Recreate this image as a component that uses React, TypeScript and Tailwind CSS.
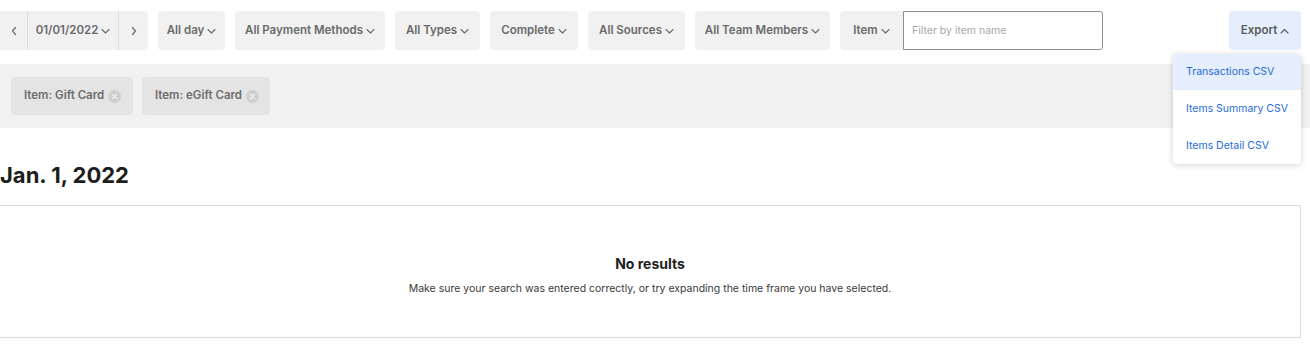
import React from "react";

const Chevron = ({ up = false }: { up?: boolean }) => (
  <svg width="9" height="6" viewBox="0 0 9 6" className="ml-[3px] shrink-0" fill="none">
    <path
      d={up ? "M1 5 L4.5 1.5 L8 5" : "M1 1.5 L4.5 5 L8 1.5"}
      stroke="currentColor"
      strokeWidth="1.1"
      strokeLinecap="round"
      strokeLinejoin="round"
    />
  </svg>
);

const Arrow = ({ dir }: { dir: "l" | "r" }) => (
  <svg width="6" height="10" viewBox="0 0 6 10" fill="none">
    <path
      d={dir === "l" ? "M4.5 1.5 L1.5 5 L4.5 8.5" : "M1.5 1.5 L4.5 5 L1.5 8.5"}
      stroke="currentColor"
      strokeWidth="1.2"
      strokeLinecap="round"
      strokeLinejoin="round"
    />
  </svg>
);

const FilterBtn = ({ label, w }: { label: string; w: string }) => (
  <div
    className={`flex h-[39px] ${w} shrink-0 items-center justify-center rounded-[4px] bg-[#f1f1f1] text-[11.5px] font-semibold text-[#6a6a6a]`}
  >
    {label}
    <Chevron />
  </div>
);

const Chip = ({ label, w }: { label: string; w: string }) => (
  <div
    className={`flex h-[38px] ${w} items-center rounded-[4px] bg-[#e4e4e4] pl-[13px] text-[11.5px] font-semibold text-[#6d6d6d]`}
  >
    {label}
    <svg width="13" height="13" viewBox="0 0 13 13" className="ml-[4px]">
      <circle cx="6.5" cy="6.5" r="6.5" fill="#cfcfcf" />
      <path d="M4.3 4.3 L8.7 8.7 M8.7 4.3 L4.3 8.7" stroke="#ededed" strokeWidth="1.4" strokeLinecap="round" />
    </svg>
  </div>
);

export default function App() {
  return (
    <div
      className="relative h-[364px] w-[1310px] overflow-hidden bg-white"
      style={{ fontFamily: "Inter, 'Noto Sans', sans-serif" }}
    >
      {/* Top filter row */}
      <div className="flex items-center gap-[10px] pr-[9px] pt-[11px]">
        <div className="flex h-[39px] w-[148px] shrink-0 items-stretch rounded-r-[4px] bg-[#f1f1f1] text-[11.5px] font-semibold text-[#6a6a6a]">
          <div className="flex w-[28px] items-center justify-center border-r border-[#dcdcdc]">
            <Arrow dir="l" />
          </div>
          <div className="flex w-[91px] items-center justify-center border-r border-[#dcdcdc]">
            01/01/2022
            <Chevron />
          </div>
          <div className="flex flex-1 items-center justify-center">
            <Arrow dir="r" />
          </div>
        </div>
        <FilterBtn label="All day" w="w-[67px]" />
        <FilterBtn label="All Payment Methods" w="w-[150px]" />
        <FilterBtn label="All Types" w="w-[85px]" />
        <FilterBtn label="Complete" w="w-[88px]" />
        <FilterBtn label="All Sources" w="w-[97px]" />
        <FilterBtn label="All Team Members" w="w-[135px]" />
        <div className="flex h-[39px] shrink-0">
          <div className="flex w-[63px] items-center justify-center rounded-l-[4px] bg-[#f1f1f1] text-[11.5px] font-semibold text-[#6a6a6a]">
            Item
            <Chevron />
          </div>
          <div className="flex w-[200px] items-center rounded-r-[3px] border border-[#8e8e8e] pl-[8px] text-[10.5px] text-[#a8a8a8]">
            Filter by item name
          </div>
        </div>
        <div className="ml-auto flex h-[39px] w-[72px] shrink-0 items-center justify-center rounded-[4px] bg-[#e5eefc] text-[11.5px] font-semibold text-[#5a5a5a]">
          Export
          <Chevron up />
        </div>
      </div>

      {/* Chip band */}
      <div className="mt-[14px] flex h-[64px] items-center gap-[9px] bg-[#f1f1f1] pl-[11px]">
        <Chip label="Item: Gift Card" w="w-[122px]" />
        <Chip label="Item: eGift Card" w="w-[128px]" />
      </div>

      {/* Heading */}
      <h1 className="mt-[33px] text-[22px] font-bold leading-[28px] text-[#1d1d1d]">Jan. 1, 2022</h1>

      {/* Results box */}
      <div className="mr-[9px] mt-[16px] flex h-[133px] flex-col items-center border-y border-r border-[#dadada] pt-[49px]">
        <div className="text-[14px] font-bold leading-[18px] text-[#1d1d1d]">No results</div>
        <div className="mt-[9px] text-[10.5px] leading-[14px] text-[#3a3a3a]">
          Make sure your search was entered correctly, or try expanding the time frame you have selected.
        </div>
      </div>

      {/* Export dropdown */}
      <div className="absolute left-[1173px] top-[54px] w-[128px] overflow-hidden rounded-[4px] bg-white shadow-[0_1px_6px_rgba(0,0,0,0.18)]">
        <div className="flex h-[36px] items-center bg-[#e5eefc] pl-[13px] text-[10.5px] text-[#1f6bd6]">
          Transactions CSV
        </div>
        <div className="flex h-[37px] items-center pl-[13px] text-[10.5px] text-[#1f6bd6]">Items Summary CSV</div>
        <div className="flex h-[37px] items-center pl-[13px] text-[10.5px] text-[#1f6bd6]">Items Detail CSV</div>
      </div>
    </div>
  );
}
